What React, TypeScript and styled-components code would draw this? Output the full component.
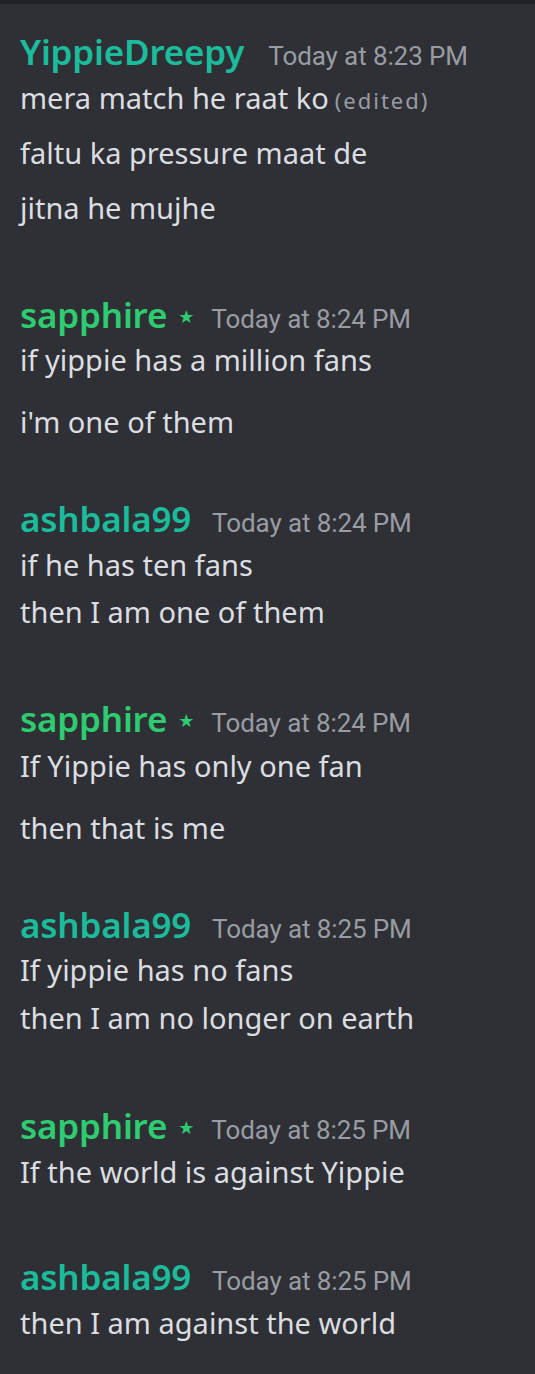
import React from "react";
import styled, { createGlobalStyle } from "styled-components";

const Global = createGlobalStyle`
  html, body { margin: 0; padding: 0; background: #2e3035; }
  body { font-family: "Noto Sans", "Open Sans", sans-serif; }
`;

const Page = styled.div`
  width: 535px;
  min-height: 1374px;
  background: #2e3035;
  border-top: 4px solid #1f2023;
  box-sizing: border-box;
  padding: 28px 0 0 20px;
  display: flex;
  flex-direction: column;
`;

const Group = styled.section<{ $gap: number }>`
  margin-top: ${(p) => p.$gap}px;
  display: flex;
  flex-direction: column;
`;

const Header = styled.div`
  display: flex;
  align-items: baseline;
  height: 40px;
  line-height: 40px;
`;

const Name = styled.span<{ $color: string }>`
  color: ${(p) => p.$color};
  font-family: "Noto Sans", sans-serif;
  font-weight: 600;
  font-size: 35px;
  letter-spacing: -0.2px;
`;

const Star = styled.span`
  color: #2ecc71;
  font-size: 18px;
  margin-left: 11px;
  font-family: "DejaVu Sans", sans-serif;
  transform: translateY(-5px);
`;

const Time = styled.span<{ $gap: number }>`
  color: #9a9ca3;
  font-family: Roboto, sans-serif;
  font-size: 26px;
  letter-spacing: -0.1px;
  margin-left: ${(p) => p.$gap}px;
`;

const Line = styled.div<{ $gap: number }>`
  margin-top: ${(p) => p.$gap}px;
  color: #dcdde1;
  font-size: 29px;
  line-height: 40px;
  height: 40px;
  white-space: nowrap;
`;

const Edited = styled.span`
  color: #9a9ca3;
  font-size: 22px;
  margin-left: 6px;
  letter-spacing: 2px;
`;

type Msg = {
  gap: number;
  name: string;
  color: string;
  star?: boolean;
  time: string;
  timeGap: number;
  lines: { text: string; gap: number; edited?: boolean }[];
};

const TEAL = "#1bbc9b";
const GREEN = "#2ecc71";

const messages: Msg[] = [
  {
    gap: 0,
    name: "YippieDreepy",
    color: TEAL,
    time: "Today at 8:23 PM",
    timeGap: 24,
    lines: [
      { text: "mera match he raat ko", gap: 6, edited: true },
      { text: "faltu ka pressure maat de", gap: 15 },
      { text: "jitna he mujhe", gap: 15 },
    ],
  },
  {
    gap: 67,
    name: "sapphire",
    color: GREEN,
    star: true,
    time: "Today at 8:24 PM",
    timeGap: 17,
    lines: [
      { text: "if yippie has a million fans", gap: 5 },
      { text: "i'm one of them", gap: 22 },
    ],
  },
  {
    gap: 57,
    name: "ashbala99",
    color: TEAL,
    time: "Today at 8:24 PM",
    timeGap: 21,
    lines: [
      { text: "if he has ten fans", gap: 6 },
      { text: "then I am one of them", gap: 7 },
    ],
  },
  {
    gap: 67,
    name: "sapphire",
    color: GREEN,
    star: true,
    time: "Today at 8:24 PM",
    timeGap: 17,
    lines: [
      { text: "If Yippie has only one fan", gap: 7 },
      { text: "then that is me", gap: 22 },
    ],
  },
  {
    gap: 57,
    name: "ashbala99",
    color: TEAL,
    time: "Today at 8:25 PM",
    timeGap: 21,
    lines: [
      { text: "If yippie has no fans", gap: 5 },
      { text: "then I am no longer on earth", gap: 8 },
    ],
  },
  {
    gap: 68,
    name: "sapphire",
    color: GREEN,
    star: true,
    time: "Today at 8:25 PM",
    timeGap: 17,
    lines: [{ text: "If the world is against Yippie", gap: 6 }],
  },
  {
    gap: 65,
    name: "ashbala99",
    color: TEAL,
    time: "Today at 8:25 PM",
    timeGap: 21,
    lines: [{ text: "then I am against the world", gap: 6 }],
  },
];

export default function App() {
  return (
    <>
      <Global />
      <Page>
        {messages.map((m, i) => (
          <Group key={i} $gap={m.gap}>
            <Header>
              <Name $color={m.color}>{m.name}</Name>
              {m.star && <Star>★</Star>}
              <Time $gap={m.timeGap}>{m.time}</Time>
            </Header>
            {m.lines.map((l, j) => (
              <Line key={j} $gap={l.gap}>
                {l.text}
                {l.edited && <Edited>(edited)</Edited>}
              </Line>
            ))}
          </Group>
        ))}
      </Page>
    </>
  );
}
